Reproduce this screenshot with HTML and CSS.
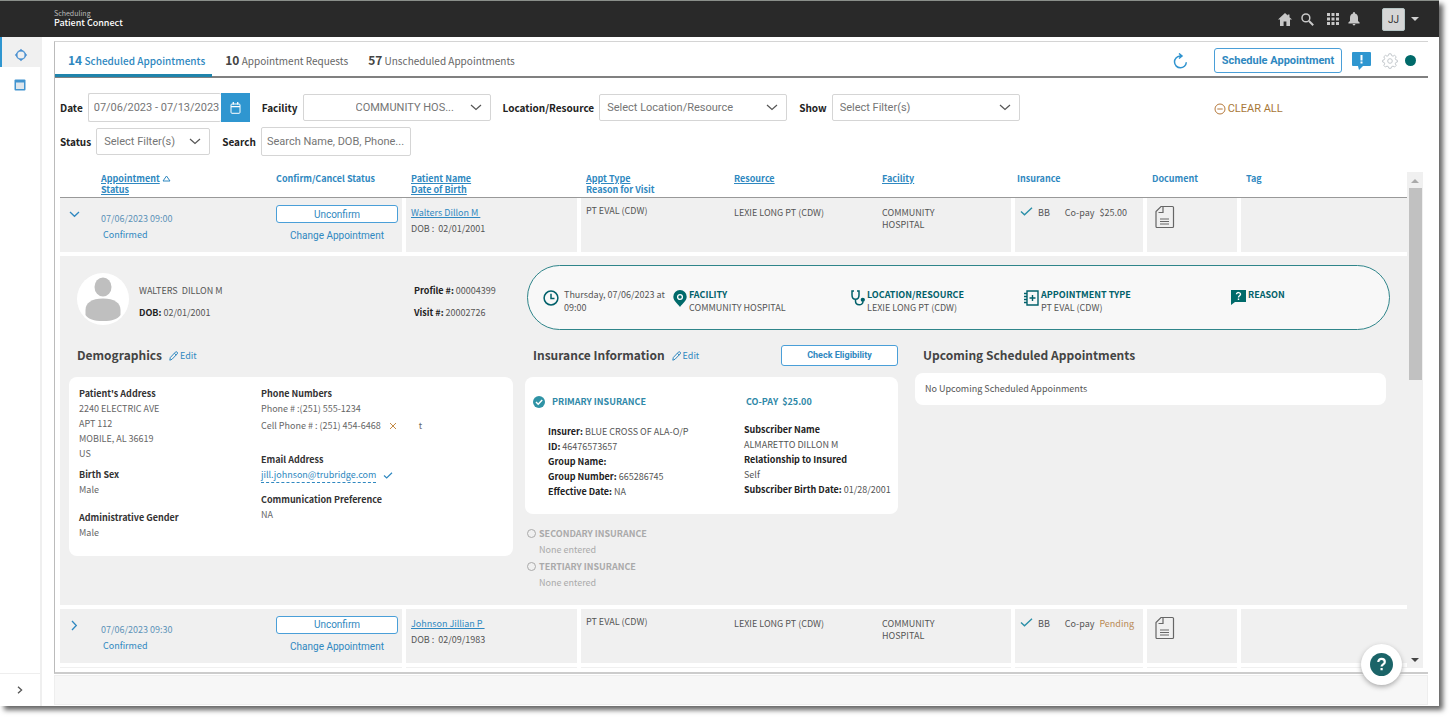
FILE: index.html
```html
<!DOCTYPE html>
<html lang="en">
<head>
<meta charset="utf-8">
<title>Patient Connect</title>
<link rel="stylesheet" href="styles.css">
</head>
<body>
<div class="window">
  <header class="topbar">
    <div class="brand"><span class="brand-sub">Scheduling</span><span class="brand-name">Patient Connect</span></div>
    <nav class="top-icons">
      <button class="icon-btn" aria-label="Home"><svg width="14" height="13" viewBox="0 0 14 13"><path d="M7 0 0 6.600h2V13h3.600V8.600h2.800V13H12V6.600h2L11.500 4.200V1.500H9.800v1.100z" fill="#c8c8c8"/></svg></button>
      <button class="icon-btn search" aria-label="Search"><svg width="13" height="13" viewBox="0 0 13 13" fill="none" stroke="#c8c8c8"><circle cx="4.900" cy="4.900" r="3.900" stroke-width="1.500"/><path d="m8 8 4.200 4.200" stroke-width="2"/></svg></button>
      <button class="icon-btn apps" aria-label="Apps"><svg width="12" height="12" viewBox="0 0 12 12" fill="#c8c8c8"><path d="M0 0h3v3H0zM4.500 0h3v3h-3zM9 0h3v3H9zM0 4.500h3v3H0zM4.500 4.500h3v3h-3zM9 4.500h3v3H9zM0 9h3v3H0zM4.500 9h3v3h-3zM9 9h3v3H9z"/></svg></button>
      <button class="icon-btn" aria-label="Notifications"><svg width="12" height="14" viewBox="0 0 12 14" fill="#c8c8c8"><path d="M6 0a1 1 0 0 1 1 1v.5C9 2 10 3.700 10 5.700V9l1.600 1.600v.8H.4v-.8L2 9V5.700C2 3.700 3 2 5 1.500V1a1 1 0 0 1 1-1zM4.600 12h2.800a1.400 1.400 0 0 1-2.800 0z"/></svg></button>
      <button class="user" aria-label="User menu"><span class="initials">JJ</span><svg width="8" height="4" viewBox="0 0 8 4"><path d="M0 0h8L4 4z" fill="#d0d0d0"/></svg></button>
    </nav>
  </header>
  <div class="body">
    <aside class="sidebar">
      <button class="side-item active" aria-label="Patient Connect"><svg width="14" height="14" viewBox="0 0 14 14"><circle cx="7" cy="7" r="4.300" fill="none" stroke="#5b9bd5" stroke-width="1.500"/><path d="m7 .8 2.200 2.400H4.800zM7 13.200 4.800 10.800h4.400zM.8 7l2.400-2.200v4.400zM13.200 7l-2.400 2.200V4.800z" fill="#4a8fd0"/></svg></button>
      <button class="side-item" aria-label="Calendar"><svg width="12" height="12" viewBox="0 0 12 12"><rect x=".5" y=".5" width="11" height="11" rx="1" fill="#4294cf"/><path d="M2 3.500h8V10H2z" fill="#dfe6ec"/></svg></button>
      <button class="side-expand" aria-label="Expand menu"><svg width="6" height="8" viewBox="0 0 6 8"><path d="m1 .7 3.600 3.300L1 7.300" fill="none" stroke="#555" stroke-width="1.300"/></svg></button>
    </aside>
    <main class="main">
      <section class="card">
        <div class="tabbar">
          <button class="tab active"><b>14</b> Scheduled Appointments</button>
          <button class="tab"><b>10</b> Appointment Requests</button>
          <button class="tab"><b>57</b> Unscheduled Appointments</button>
          <div class="actions">
            <button class="icon-btn refresh" aria-label="Refresh"><svg width="15" height="16" viewBox="0 0 15 16" fill="none" stroke="#2f93cf" stroke-width="1.500"><path d="M8.300 3H7a5.900 5.900 0 1 0 6.300 6.200M6 .5 9 3 6 5.500"/></svg></button>
            <button class="btn schedule">Schedule Appointment</button>
            <button class="icon-btn" aria-label="Alerts"><svg width="19" height="18" viewBox="0 0 19 18"><path d="M1 0h17a1 1 0 0 1 1 1v12a1 1 0 0 1-1 1h-7l-4 4-1-4H1a1 1 0 0 1-1-1V1a1 1 0 0 1 1-1z" fill="#2f96d0"/><path d="M8.500 3h2v5.500h-2zM8.500 9.600h2v2h-2z" fill="#fff"/></svg></button>
            <button class="icon-btn gear" aria-label="Settings"><svg width="16" height="16" viewBox="0 0 16 16" fill="none" stroke="#c4c9cd"><circle cx="8" cy="8" r="2.300"/><path d="M6.900.8h2.200l.5 1.800 1.400.6 1.600-.9 1.600 1.500-.9 1.700.6 1.400 1.500.4v1.700l-1.500.4-.6 1.400.9 1.600-1.600 1.600-1.600-.9-1.400.6-.5 1.600H6.900l-.5-1.600-1.400-.6-1.600.9-1.600-1.600.9-1.600-.6-1.400-1.500-.4V7.300l1.500-.4.6-1.400-.9-1.700 1.600-1.500 1.600.9 1.400-.6z"/></svg></button>
            <span class="dot"></span>
          </div>
        </div>
        <form class="filters">
          <div class="filter-row">
            <label for="date">Date</label>
            <span class="date"><input id="date" type="text" value="07/06/2023 - 07/13/2023"><button type="button" aria-label="Pick dates"><svg width="11" height="12" viewBox="0 0 11 12" fill="none" stroke="#fff"><rect x="1" y="2" width="9" height="9.300" rx="1"/><path d="M1 4.700h9M3.300 0v2.500M7.700 0v2.500" stroke-width="1.300"/></svg></button></span>
            <label for="facility">Facility</label>
            <span class="select wide indent"><select id="facility"><option>COMMUNITY HOS...</option></select><svg width="12" height="7" viewBox="0 0 12 7"><path d="m1 1 5 4.500L11 1"/></svg></span>
            <label for="location">Location/Resource</label>
            <span class="select wide"><select id="location"><option>Select Location/Resource</option></select><svg width="12" height="7" viewBox="0 0 12 7"><path d="m1 1 5 4.500L11 1"/></svg></span>
            <label for="show">Show</label>
            <span class="select wide"><select id="show"><option>Select Filter(s)</option></select><svg width="12" height="7" viewBox="0 0 12 7"><path d="m1 1 5 4.500L11 1"/></svg></span>
            <button type="button" class="clear"><svg width="12" height="12" viewBox="0 0 12 12" fill="none" stroke="#b5793c"><circle cx="6" cy="6" r="5"/><path d="M3.300 6h5.400"/></svg>CLEAR ALL</button>
          </div>
          <div class="filter-row">
            <label for="status">Status</label>
            <span class="select"><select id="status"><option>Select Filter(s)</option></select><svg width="12" height="7" viewBox="0 0 12 7"><path d="m1 1 5 4.500L11 1"/></svg></span>
            <label for="search">Search</label>
            <input class="search-input" id="search" type="text" placeholder="Search Name, DOB, Phone...">
          </div>
        </form>
        <div class="list">
          <table class="appts">
            <colgroup><col class="c-toggle"><col class="c-date"><col class="c-confirm"><col class="c-patient"><col class="c-type"><col class="c-res"><col class="c-fac"><col class="c-ins"><col class="c-doc"><col class="c-tag"></colgroup>
            <thead><tr>
              <th></th>
              <th><a href="#">Appointment</a> <svg width="9" height="7" viewBox="0 0 9 7"><path d="M4.500 1 8 6H1z" fill="none" stroke="#2f88c0"/></svg><br><a href="#">Status</a></th>
              <th>Confirm/Cancel Status</th>
              <th><a href="#">Patient Name</a><br><a href="#">Date of Birth</a></th>
              <th><a href="#">Appt Type</a><br>Reason for Visit</th>
              <th><a href="#">Resource</a></th>
              <th><a href="#">Facility</a></th>
              <th class="tight">Insurance</th><th>Document</th><th>Tag</th>
            </tr></thead>
            <tbody>
            <tr class="row">
              <td class="toggle"><button class="icon-btn" aria-label="Collapse"><svg width="11" height="7" viewBox="0 0 11 7"><path d="m1 1 4.500 4.300L10 1" fill="none" stroke="#2f88c0" stroke-width="1.300"/></svg></button></td>
              <td class="when">07/06/2023 09:00<span>Confirmed</span></td>
              <td class="confirm split"><button class="btn">Unconfirm</button><button class="link">Change Appointment</button></td>
              <td class="split patient"><a href="#">Walters Dillon M&nbsp;</a><span>DOB :&nbsp; 02/01/2001</span></td>
              <td>PT EVAL (CDW)</td><td class="low">LEXIE LONG PT (CDW)</td><td class="split low">COMMUNITY<br>HOSPITAL</td>
              <td class="split low"><div class="ins"><svg width="13" height="9" viewBox="0 0 13 9"><path d="m1 4.500 3.500 3.300L12 .7" fill="none" stroke="#2a8fa8" stroke-width="1.400"/></svg><span class="code">BB</span><span>Co-pay</span><span>$25.00</span></div></td>
              <td class="split doc"><svg width="20" height="24" viewBox="0 0 20 24" fill="none" stroke="#666"><path d="M6 1.500h11.500a1 1 0 0 1 1 1v19a1 1 0 0 1-1 1H2a1 1 0 0 1-1-1V6.500zM8 1.500v6H3.500M5 14h9M5 16.500h9M5 19h9" stroke-width="1.200"/></svg></td>
              <td></td>
            </tr>
            <tr class="detail-row"><td colspan="10">
              <div class="summary">
                <svg class="avatar" width="52" height="52" viewBox="0 0 52 52"><circle cx="26" cy="26" r="26" fill="#fff"/><ellipse cx="26" cy="14" rx="8.500" ry="9.500" fill="#bfbfbf"/><path d="M8.500 42v-5c0-7 6-11.500 17.500-11.500S43.500 30 43.500 37v5c-3 4-8 6-17.500 6S11.500 46 8.500 42z" fill="#bfbfbf"/></svg>
                <div class="who"><p>WALTERS&nbsp; DILLON M</p><p><b>DOB:</b> 02/01/2001</p></div>
                <div class="ids"><p><b>Profile #:</b> 00004399</p><p><b>Visit #:</b> 20002726</p></div>
                <div class="pill">
                  <div class="fact time"><svg width="16" height="16" viewBox="0 0 16 16" fill="none" stroke="#00606a" stroke-width="1.500"><circle cx="8" cy="8" r="6.900"/><path d="M8 3.800V8.500h3.500"/></svg><p>Thursday, 07/06/2023 at 09:00</p></div>
                  <div class="fact f-fac"><svg width="14" height="17" viewBox="0 0 14 17"><path d="M7 0a6.700 6.700 0 0 1 6.700 6.800C13.700 11 9 14 7 17 5 14 .3 11 .3 6.800A6.700 6.700 0 0 1 7 0z" fill="#006a6a"/><circle cx="7" cy="7" r="2.400" fill="none" stroke="#fff" stroke-width="1.300"/></svg><p><b>FACILITY</b><br>COMMUNITY HOSPITAL</p></div>
                  <div class="fact f-loc"><svg width="14" height="16" viewBox="0 0 14 16" fill="none" stroke="#00606a" stroke-width="1.500"><path d="M3 1H1v4c0 3 1.500 4.300 3.500 4.300S8 8 8 5V1H6M4.500 9.300V11c0 5 7.500 5 7.500.5"/><circle cx="11.800" cy="9.800" r="1.400" fill="#00606a"/></svg><p><b>LOCATION/RESOURCE</b><br>LEXIE LONG PT (CDW)</p></div>
                  <div class="fact f-type"><svg width="15" height="16" viewBox="0 0 15 16" fill="none" stroke="#00606a"><path d="M3 1h11v14H3z" stroke-width="1.400"/><path d="M0 3.500h3M0 6.500h3M0 9.500h3M0 12.500h3M5.500 8h6M8.500 5v6" stroke-width="1.400"/></svg><p><b>APPOINTMENT TYPE</b><br>PT EVAL (CDW)</p></div>
                  <div class="fact"><svg width="15" height="15" viewBox="0 0 15 15"><path d="M0 0h15v12H4l-4 3z" fill="#006a6a"/><path d="M5.500 4.300c0-2.400 4-2.200 4 0 0 1.500-2 1.400-2 3.100M7.500 8.500V10" fill="none" stroke="#fff" stroke-width="1.400"/></svg><p><b>REASON</b></p></div>
                </div>
              </div>
              <div class="panels">
                <section class="demo">
                  <div class="panel-head"><h2>Demographics</h2><a class="edit" href="#"><svg width="9" height="10" viewBox="0 0 9 10" fill="none" stroke="#2f88c0"><path d="M.8 9.200 1.300 6.500 6.300 1.200a1.200 1.200 0 0 1 1.900 1.700L3 8.300zM5.300 2.300l1.900 1.700"/></svg>Edit</a></div>
                  <div class="box demo-box">
                    <div class="col-a">
                      <div><b>Patient's Address</b><p>2240 ELECTRIC AVE</p><p>APT 112</p><p>MOBILE, AL 36619</p><p>US</p></div>
                      <div class="sex"><b>Birth Sex</b><p>Male</p></div>
                      <div class="gender"><b>Administrative Gender</b><p>Male</p></div>
                    </div>
                    <div class="col-b">
                      <b>Phone Numbers</b><p>Phone # :(251) 555-1234</p>
                      <p class="cell">Cell Phone # : (251) 454-6468<svg width="8" height="8" viewBox="0 0 8 8"><path d="m1 1 6 6M7 1 1 7" stroke="#c48a45"/></svg><span>t</span></p>
                      <div class="mail"><b>Email Address</b><p><a href="#">jill.johnson@trubridge.com</a><svg width="10" height="7" viewBox="0 0 10 7"><path d="m1 3.500 2.700 2.500L9 .8" fill="none" stroke="#2f88c0" stroke-width="1.200"/></svg></p></div>
                      <b>Communication Preference</b><p>NA</p>
                    </div>
                  </div>
                </section>
                <section class="insurance">
                  <div class="panel-head"><h2>Insurance Information</h2><a class="edit" href="#"><svg width="9" height="10" viewBox="0 0 9 10" fill="none" stroke="#2f88c0"><path d="M.8 9.200 1.300 6.500 6.300 1.200a1.200 1.200 0 0 1 1.900 1.700L3 8.300zM5.300 2.300l1.900 1.700"/></svg>Edit</a><button class="btn check">Check Eligibility</button></div>
                  <div class="box ins-box">
                    <div class="ins-title"><svg width="12" height="12" viewBox="0 0 12 12"><circle cx="6" cy="6" r="6" fill="#2f93a5"/><path d="m3 6 2.200 2.200L9.200 4" fill="none" stroke="#fff" stroke-width="1.500"/></svg><b>PRIMARY INSURANCE</b></div>
                    <div class="copay"><b>CO-PAY&nbsp; $25.00</b></div>
                    <div class="policy"><p><b>Insurer:</b> BLUE CROSS OF ALA-O/P</p><p><b>ID:</b> 46476573657</p><p><b>Group Name:</b></p><p><b>Group Number:</b> 665286745</p><p><b>Effective Date:</b> NA</p></div>
                    <div class="subscriber"><p><b>Subscriber Name</b></p><p>ALMARETTO DILLON M</p><p><b>Relationship to Insured</b></p><p>Self</p><p><b>Subscriber Birth Date:</b> 01/28/2001</p></div>
                  </div>
                  <div class="other"><b><i></i>SECONDARY INSURANCE</b><p>None entered</p><b><i></i>TERTIARY INSURANCE</b><p>None entered</p></div>
                </section>
                <section class="upcoming">
                  <div class="panel-head"><h2>Upcoming Scheduled Appointments</h2></div>
                  <div class="box up-box">No Upcoming Scheduled Appoinments</div>
                </section>
              </div>
            </td></tr>
            <tr class="row">
              <td class="toggle"><button class="icon-btn next" aria-label="Expand"><svg width="7" height="11" viewBox="0 0 7 11"><path d="m1 1 4.300 4.500L1 10" fill="none" stroke="#2f88c0" stroke-width="1.300"/></svg></button></td>
              <td class="when">07/06/2023 09:30<span>Confirmed</span></td>
              <td class="confirm split"><button class="btn">Unconfirm</button><button class="link">Change Appointment</button></td>
              <td class="split patient"><a href="#">Johnson Jillian P&nbsp;</a><span>DOB :&nbsp; 02/09/1983</span></td>
              <td>PT EVAL (CDW)</td><td class="low">LEXIE LONG PT (CDW)</td><td class="split low">COMMUNITY<br>HOSPITAL</td>
              <td class="split low"><div class="ins"><svg width="13" height="9" viewBox="0 0 13 9"><path d="m1 4.500 3.500 3.300L12 .7" fill="none" stroke="#2a8fa8" stroke-width="1.400"/></svg><span class="code">BB</span><span>Co-pay</span><span class="pending">Pending</span></div></td>
              <td class="split doc"><svg width="20" height="24" viewBox="0 0 20 24" fill="none" stroke="#666"><path d="M6 1.500h11.500a1 1 0 0 1 1 1v19a1 1 0 0 1-1 1H2a1 1 0 0 1-1-1V6.500zM8 1.500v6H3.500M5 14h9M5 16.500h9M5 19h9" stroke-width="1.200"/></svg></td>
              <td></td>
            </tr>
            <tr class="next-row"><td></td><td></td><td class="split"></td><td class="split"></td><td></td><td></td><td class="split"></td><td class="split"></td><td class="split"></td><td></td></tr>
            </tbody>
          </table>
          <div class="scrollbar"><svg width="8" height="4" viewBox="0 0 8 4"><path d="M0 4h8L4 0z" fill="#aaa"/></svg><span class="thumb"></span><svg width="8" height="4" viewBox="0 0 8 4"><path d="M0 0h8L4 4z" fill="#444"/></svg></div>
        </div>
      </section>
      <footer class="footer"></footer>
    </main>
  </div>
  <button class="help" aria-label="Help"><svg width="23" height="23" viewBox="0 0 23 23"><circle cx="11.500" cy="11.500" r="11.500" fill="#1b6468"/><path d="M8.300 9c0-4.200 6.500-4 6.500 0 0 2.500-3.200 2.300-3.200 4.600M11.600 15v2.300" fill="none" stroke="#fff" stroke-width="2.200"/></svg></button>
</div>
</body>
</html>
```
FILE: styles.css
```css
* { box-sizing: border-box; }
body {
  margin: 0;
  height: 100vh;
  padding: 0 10px 11px 0;
  background: #fff;
  color: #555;
  font: 9px/15px "Noto Sans CJK SC", "Open Sans", sans-serif;
  overflow: hidden;
}
p, h2 { margin: 0; }
b { color: #333; }
a, .link { color: #2f88c0; }
svg { display: block; flex: none; }
button, input, select { font-family: Roboto, "Liberation Sans", sans-serif; margin: 0; }
button { padding: 0; border: 0; background: none; cursor: pointer; }
.window {
  position: relative;
  display: flex;
  flex-direction: column;
  height: 100%;
  background: #fff;
  box-shadow: 4px 4px 5px #666;
}
.topbar {
  display: flex;
  justify-content: space-between;
  align-items: center;
  height: 37px;
  padding: 0 20px 0 54px;
  background: #292929;
  border-top: 1px solid #8a8f8a;
}
.brand { display: flex; flex-direction: column; color: #fff; }
.brand-sub { font-size: 7px; line-height: 8px; color: #bbb; }
.brand-name { font-size: 9px; line-height: 12px; font-weight: 500; }
.top-icons { display: flex; align-items: center; gap: 9px; }
.apps { margin-left: 4px; }
.user { display: flex; align-items: center; gap: 6px; margin-left: 13px; }
.initials {
  width: 23px;
  height: 23px;
  border-radius: 2px;
  border: 1px solid #b5c4c4;
  background: #d6d6d6;
  color: #333;
  font-size: 10px;
  line-height: 22px;
}
.body { display: flex; flex: 1; min-height: 0; }
.sidebar {
  display: flex;
  flex-direction: column;
  width: 42px;
  border-right: 2px solid #efefef;
}
.side-item { display: flex; align-items: center; justify-content: center; height: 30px; }
.side-item.active { height: 30px; padding-top: 6px; background: #f0f0f0; border-left: 2px solid #2f96d0; }
.side-item + .side-item { padding-top: 6px; }
.side-expand { display: flex; align-items: center; justify-content: center; height: 33px; margin-top: auto; border-top: 1px solid #eee; }
.main { display: flex; flex-direction: column; flex: 1; min-width: 0; padding: 4px 11px 1px 12px; }
.card {
  display: flex;
  flex-direction: column;
  flex: 1;
  min-height: 0;
  border: solid #d4d4d4;
  border-width: 1px 0 2px 1px;
  border-color: #d4d4d4 #ddd #ccc #bbb;
}
.footer { height: 30px; margin-top: 1px; background: #f7f7f7; border: 1px solid #eee; }
.tabbar { display: flex; align-items: stretch; height: 36px; border-bottom: 2px solid #808080; }
.tab {
  margin-bottom: -1px;
  padding: 4px 7px 0 13px;
  border-bottom: 3px solid transparent;
  color: #666;
  font: 10px/20px "Noto Sans CJK SC", "Open Sans", sans-serif;
}
.tab b { font-size: 12px; color: #444; }
.tab.active { color: #2f88c0; font-weight: 500; border-bottom-color: #1f84ac; }
.tab.active b { color: #2f88c0; }
.actions { display: flex; align-items: center; gap: 11px; margin-left: auto; padding: 3px 12px 0 0; }
.refresh { margin-right: 15px; }
.dot { width: 11px; height: 11px; border-radius: 50%; background: #006a6a; }
.gear { margin-right: -4px; }
.btn {
  border: 1px solid #4a9fd8;
  border-radius: 3px;
  background: #fff;
  color: #2f88c0;
  font-size: 10px;
}
.schedule { width: 128px; height: 25px; margin-right: -1px; font-size: 11px; font-weight: 700; }
.filters { display: flex; flex-direction: column; gap: 5px; padding: 15px 5px 0; }
.filter-row { display: flex; align-items: center; height: 29px; }
.filter-row label { margin-right: 5px; color: #222; font-size: 10px; font-weight: 700; }
.filter-row input, .filter-row select {
  border: 1px solid #d5d5d5;
  border-radius: 2px;
  background: #fff;
  color: #757575;
  font-size: 11px;
  outline: 0;
}
.filter-row input::placeholder { color: #757575; }
.date { display: flex; margin-right: 12px; }
.date input { width: 133px; height: 29px; padding: 0 0 0 5px; border-right: 0; }
.date button { display: flex; align-items: center; justify-content: center; width: 29px; background: #2f96d0; }
.select { position: relative; width: 114px; margin-right: 12px; }
.select.wide { width: 188px; }
.select select { width: 100%; height: 27px; padding: 0 7px; appearance: none; }
.select.indent select { padding-left: 52px; }
.select svg { position: absolute; right: 9px; top: 10px; fill: none; stroke: #555; stroke-width: 1.200px; pointer-events: none; }
.search-input { width: 150px; height: 29px; padding: 0 5px; }
.clear { display: flex; align-items: center; gap: 2px; margin: 2px 0 0 182px; color: #a87838; font-size: 11px; }
.list { display: flex; flex: 1; min-height: 0; margin: 16px 5px 4px; overflow: hidden; }
.appts { flex: 1; width: 100%; table-layout: fixed; border-spacing: 0; }
.c-toggle { width: 36px; }
.c-date { width: 175px; }
.c-confirm { width: 135px; }
.c-patient { width: 175px; }
.c-type, .c-res { width: 148px; }
.c-fac { width: 138px; }
.c-ins { width: 132px; }
.c-doc { width: 94px; }
.c-tag { width: 166px; }
.appts td { vertical-align: top; background: #f0f0f0; border-bottom: 4px solid #fff; padding: 0; }
.appts th {
  height: 26px;
  padding: 1px 0 0 5px;
  border-bottom: 1px solid #999;
  color: #2f88c0;
  font-size: 9px;
  line-height: 11px;
  text-align: left;
  vertical-align: top;
}
.appts th.tight { padding-left: 2px; }
.appts th svg { display: inline; }
.appts td.split { border-right: 4px solid #fff; }
.appts .row td { height: 58px; padding: 7px 0 0 5px; line-height: 12px; }
.appts .row td.low { padding-top: 9px; }
.appts .row td.doc { padding-left: 8px; }
.appts .row td.toggle { padding: 11px 0 0 9px; }
.next { margin-left: 2px; }
.appts .row td.when { padding-top: 15px; color: #5c93b8; }
.when span { display: block; margin: 4px 0 0 2px; color: #2f88c0; }
.appts .row td.confirm { padding: 7px 4px 0 5px; }
.confirm .btn { display: block; width: 100%; height: 18px; }
.confirm .link { display: block; width: 100%; margin-top: 7px; font-size: 10px; }
.appts .row td.patient { padding-top: 9px; }
.patient span { display: block; margin-top: 4px; }
.ins { display: flex; gap: 5px; }
.ins .code { margin-right: 10px; }
.pending { color: #b98a55; }
.detail-row td { height: 352px; }
.summary { display: flex; align-items: center; padding: 9px 17px 0; }
.avatar { margin-top: 2px; }
.who, .ids { padding-top: 8px; color: #555; }
.who p, .ids p { line-height: 22px; }
.who b, .ids b, .ins-box b { color: #222; }
.who { width: 275px; margin-left: 10px; }
.ids { width: 113px; }
.pill {
  display: flex;
  flex: 1;
  height: 65px;
  padding: 22px 15px 0;
  border: 1px solid #2f858a;
  border-radius: 33px;
  background: #f8f8f8;
}
.fact { display: flex; gap: 2px; }
.fact svg { margin-top: 2px; }
.fact p { line-height: 13px; }
.fact b { color: #00606a; }
.fact.time { width: 130px; gap: 5px; }
.f-fac { width: 178px; }
.f-loc { width: 173px; }
.f-type { width: 207px; }
.panels { display: flex; align-items: flex-start; padding: 12px 21px 0 9px; }
.demo { width: 444px; margin-right: 12px; }
.insurance { width: 373px; margin-right: 17px; }
.upcoming { flex: 1; }
.panel-head { display: flex; align-items: center; gap: 7px; height: 26px; padding-left: 8px; }
h2 { font-size: 12px; line-height: 20px; color: #444; }
.edit { display: flex; align-items: center; gap: 2px; padding-top: 1px; font-size: 9px; text-decoration: none; }
.check { width: 117px; height: 21px; margin-left: auto; font-size: 9px; font-weight: 700; }
.box { border-radius: 8px; background: #fff; }
.box b { display: inline-block; }
.demo-box { display: flex; height: 179px; margin-top: 9px; padding: 9px 10px; color: #666; }
.col-a { width: 182px; }
.sex { margin-top: 6px; }
.gender { margin-top: 13px; }
.cell { display: flex; align-items: center; gap: 8px; margin-top: 2px; }
.cell span { margin-left: 14px; }
.mail { margin: 19px 0 9px; }
.mail p { display: flex; align-items: center; gap: 7px; }
.mail a { border-bottom: 1px dashed #2f88c0; line-height: 15px; text-decoration: none; }
.ins-box {
  display: grid;
  grid-template-columns: 196px 1fr;
  align-content: start;
  height: 137px;
  margin-top: 9px;
  padding: 17px 4px 0 8px;
}
.ins-title { display: flex; align-items: center; gap: 7px; }
.ins-box .ins-title b, .ins-box .copay b { color: #2f88a8; }
.copay { padding-left: 17px; }
.policy { padding: 15px 0 0 15px; }
.subscriber { padding: 13px 0 0 15px; white-space: nowrap; }
.other { margin-top: 11px; padding-left: 2px; color: #aaa; }
.other b { display: flex; align-items: center; gap: 3px; color: #aaa; line-height: 17px; }
.other i { width: 9px; height: 9px; border: 1px solid #aaa; border-radius: 50%; }
.other p { padding-left: 12px; line-height: 16px; }
.up-box { height: 32px; margin-top: 5px; padding: 8px 10px; }
.appts .next-row td { height: 1px; border-bottom: 0; }
.scrollbar { display: flex; flex-direction: column; align-items: center; width: 16px; padding: 7px 0 6px; background: #f0f0f0; }
.thumb { width: 13px; height: 192px; margin: 5px 0 auto; background: #c1c1c1; }
.help {
  position: absolute;
  right: 37px;
  bottom: 21px;
  display: flex;
  align-items: center;
  justify-content: center;
  width: 41px;
  height: 41px;
  border-radius: 50%;
  background: #fff;
  box-shadow: 0 2px 5px #aaa;
}
```
